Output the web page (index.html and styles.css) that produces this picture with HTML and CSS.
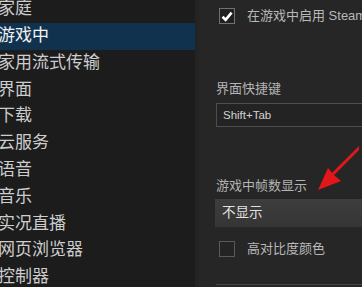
FILE: index.html
```html
<!DOCTYPE html>
<html lang="zh-CN">
<head>
    <meta charset="UTF-8">
    <title>设置 - 游戏中</title>
    <link rel="stylesheet" href="styles.css">
</head>
<body>
    <div class="settings">
        <ul class="nav">
            <li>家庭</li>
            <li class="active">游戏中</li>
            <li>家用流式传输</li>
            <li>界面</li>
            <li>下载</li>
            <li>云服务</li>
            <li>语音</li>
            <li>音乐</li>
            <li>实况直播</li>
            <li>网页浏览器</li>
            <li>控制器</li>
        </ul>

        <div class="panel">
            <label class="check-row">
                <span class="check checked">
                    <svg width="12" height="11" viewBox="0 0 12 11"><path d="M1.5 5.8 L4.6 8.8 L10.6 1.6" fill="none" stroke="#fff" stroke-width="2.6"/></svg>
                </span>
                <span class="check-label">在游戏中启用 Steam 界面</span>
            </label>

            <div class="field-title first">界面快捷键</div>
            <div class="input">Shift+Tab</div>

            <div class="field-title second">游戏中帧数显示</div>
            <div class="select">不显示</div>

            <label class="check-row low">
                <span class="check"></span>
                <span class="check-label">高对比度颜色</span>
            </label>

            <div class="divider"></div>

            <!-- annotation arrow -->
            <svg class="arrow" width="60" height="60" viewBox="0 0 60 60">
                <line x1="62" y1="8" x2="32" y2="38" stroke="#e3161b" stroke-width="3"/>
                <polygon points="19,52 29,30 35,37 42,43" fill="#e3161b"/>
            </svg>
        </div>
    </div>
</body>
</html>
```

FILE: styles.css
```css
/* Global */
body, html {
    margin: 0;
    padding: 0;
    height: 100%;
    background: #262626;
    font-family: 'Liberation Sans', 'Noto Sans CJK SC', sans-serif;
    overflow: hidden;
}

.settings {
    display: flex;
    height: 100vh;
}

/* Sidebar */
.nav {
    list-style: none;
    margin: 0;
    padding: 0;
    width: 195px;
    flex-shrink: 0;
    background: #1c1c1c;
    margin-top: -3.8px;
}

.nav li {
    height: 26.8px;
    line-height: 26.8px;
    font-size: 17px;
    color: #cdcdcd;
    text-indent: -2px;
    white-space: nowrap;
}

.nav li.active {
    background: #11324f;
    color: #f2f2f2;
}

/* Right panel */
.panel {
    position: relative;
    flex: 1;
    padding-left: 21px;
    overflow: hidden;
    background: linear-gradient(to right, #222 0, #262626 6px);
}

.check-row {
    display: flex;
    align-items: center;
    height: 16px;
    line-height: 16px;
    margin-top: 8px;
    margin-left: 3px;
    white-space: nowrap;
}

.check-row.low {
    margin-top: 14px;
}

.check {
    width: 14px;
    height: 14px;
    border: 1px solid #5a5a5a;
    background: #242424;
    display: flex;
    align-items: center;
    justify-content: center;
    flex-shrink: 0;
}

.check.checked {
    border-color: #717171;
    background: #202020;
}

.check-label {
    margin-left: 12px;
    font-size: 13px;
    color: #b9b9b9;
}

.field-title {
    font-size: 13px;
    color: #b4b4b4;
    line-height: 16px;
    white-space: nowrap;
}

.field-title.first {
    margin-top: 57px;
}

.field-title.second {
    margin-top: 51px;
}

.input {
    margin-top: 6px;
    width: 260px;
    height: 22px;
    border: 1px solid #4d4d4d;
    background: #232323;
    color: #d2d2d2;
    font-size: 11.5px;
    line-height: 22px;
    padding-left: 6px;
}

.select {
    margin-top: 5px;
    margin-left: -1px;
    width: 260px;
    height: 28px;
    background: linear-gradient(to bottom, #3d3d3d, #353535);
    color: #e2e2e2;
    font-size: 13.5px;
    line-height: 28px;
    padding-left: 7px;
}

.divider {
    margin-top: 27px;
    height: 1px;
    width: 300px;
    background: #454545;
}

.arrow {
    position: absolute;
    left: 104px;
    top: 138px;
}
```
